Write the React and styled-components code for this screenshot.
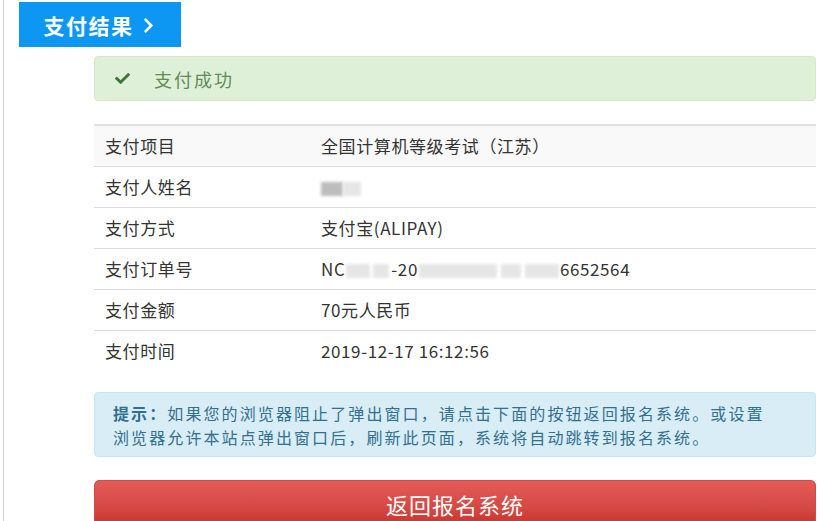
import styled, { createGlobalStyle } from "styled-components";
import { FaCheck, FaChevronRight } from "react-icons/fa";

const GlobalStyle = createGlobalStyle`
  body {
    margin: 0;
    background: #fff;
    font-family: "Microsoft YaHei", "Noto Sans CJK SC", "Noto Sans", sans-serif;
    color: #333;
  }
`;

const Page = styled.div`
  margin-left: 3px;
  border-left: 1px solid #d4d4d4;
  min-height: 521px;
  padding-top: 2px;
  box-sizing: border-box;
  overflow: hidden;
`;

const TabTitle = styled.div`
  margin-left: 15px;
  width: 162px;
  height: 45px;
  background: #0d97f2;
  color: #fff;
  font-size: 21px;
  letter-spacing: 1.5px;
  font-weight: bold;
  display: flex;
  align-items: center;
  justify-content: center;
  gap: 6px;
  svg {
    font-size: 17px;
    margin-top: 1px;
  }
`;

const Content = styled.div`
  margin-left: 90px;
  width: 722px;
  display: flex;
  flex-direction: column;
`;

const Alert = styled.div`
  box-sizing: border-box;
  border-radius: 4px;
  border: 1px solid ${({ tone }) => (tone === "info" ? "#c6e6f2" : "#d6e9c6")};
  background: ${({ tone }) => (tone === "info" ? "#d9edf7" : "#dff0d8")};
  color: ${({ tone }) => (tone === "info" ? "#31708f" : "#3c763d")};
`;

const SuccessAlert = styled(Alert)`
  margin-top: 9px;
  height: 45px;
  display: flex;
  align-items: center;
  padding-left: 20px;
  font-size: 18px;
  letter-spacing: 2px;
  gap: 24px;
  svg {
    font-size: 15px;
    color: #3c763d;
  }
  span {
    color: #5f8c57;
  }
`;

const InfoAlert = styled(Alert)`
  margin-top: 21px;
  height: 65px;
  padding: 8px 18px;
  font-size: 16px;
  letter-spacing: 2.1px;
  line-height: 24px;
  white-space: nowrap;
  strong {
    font-weight: bold;
  }
`;

const Table = styled.table`
  margin-top: 23px;
  width: 100%;
  border-collapse: collapse;
  font-size: 17px;
  letter-spacing: 0.6px;
  border-top: 2px solid #e2e2e2;
`;

const Row = styled.tr`
  height: 41px;
  background: ${({ striped }) => (striped ? "#f9f9f9" : "#fff")};
  border-top: 1px solid #dcdcdc;
  &:first-child {
    border-top: none;
  }
`;

const LabelCell = styled.td`
  width: 216px;
  padding: 0 0 0 11px;
  color: #333;
`;

const ValueCell = styled.td`
  padding: 0;
  color: #333;
`;

const Blur = styled.span`
  display: inline-block;
  vertical-align: middle;
  width: ${({ w }) => w}px;
  height: 14px;
  background: ${({ dark }) => (dark ? "#bdbdbd" : "#e6e6e6")};
  filter: blur(1.5px);
  margin: 0 ${({ gap }) => gap || 0}px;
`;

const ReturnButton = styled.button`
  margin-top: 23px;
  height: 48px;
  width: 100%;
  border: 1px solid #d24a45;
  border-radius: 5px;
  background: linear-gradient(to bottom, #e45b57 0%, #d44843 60%, #c9302c 100%);
  color: #fff;
  font-family: inherit;
  font-size: 22px;
  letter-spacing: 1px;
  cursor: pointer;
`;

const rows = [
  { label: "支付项目", value: "全国计算机等级考试（江苏）" },
  {
    label: "支付人姓名",
    value: (
      <>
        <Blur w={22} dark />
        <Blur w={18} />
      </>
    ),
  },
  { label: "支付方式", value: "支付宝(ALIPAY)" },
  {
    label: "支付订单号",
    value: (
      <>
        NC
        <Blur w={24} gap={1} />
        <Blur w={16} gap={2} />
        -20
        <Blur w={78} gap={1} />
        <Blur w={20} gap={3} />
        <Blur w={34} gap={1} />
        6652564
      </>
    ),
  },
  { label: "支付金额", value: "70元人民币" },
  { label: "支付时间", value: "2019-12-17 16:12:56" },
];

export default function App() {
  return (
    <>
      <GlobalStyle />
      <Page>
        <TabTitle>
          支付结果 <FaChevronRight />
        </TabTitle>
        <Content>
          <SuccessAlert>
            <FaCheck />
            <span>支付成功</span>
          </SuccessAlert>
          <Table>
            <tbody>
              {rows.map((row, i) => (
                <Row key={row.label} striped={i === 0}>
                  <LabelCell>{row.label}</LabelCell>
                  <ValueCell>{row.value}</ValueCell>
                </Row>
              ))}
            </tbody>
          </Table>
          <InfoAlert tone="info">
            <strong>提示：</strong>如果您的浏览器阻止了弹出窗口，请点击下面的按钮返回报名系统。或设置
            <br />
            浏览器允许本站点弹出窗口后，刷新此页面，系统将自动跳转到报名系统。
          </InfoAlert>
          <ReturnButton>返回报名系统</ReturnButton>
        </Content>
      </Page>
    </>
  );
}
